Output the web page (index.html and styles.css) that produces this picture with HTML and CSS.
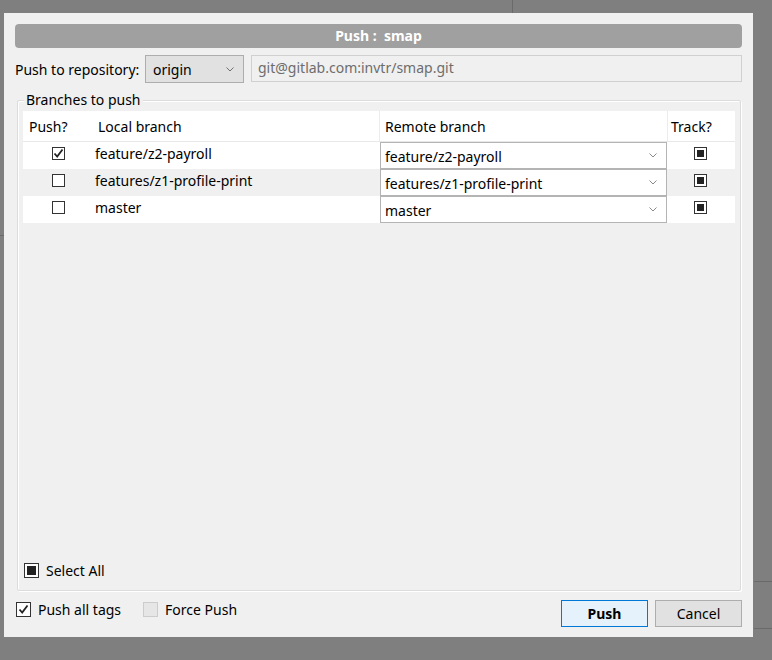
FILE: index.html
```html
<!DOCTYPE html>
<html>
<head>
<meta charset="utf-8">
<link rel="stylesheet" href="styles.css">
</head>
<body>
<div class="bg-line bl-v"></div>
<div class="bg-line bl-h1"></div>
<div class="bg-line bl-h2"></div>
<div class="bg-line bl-h3"></div>
<div class="dialog">
  <div class="title">Push :&nbsp; smap</div>
  <div class="repo-row">
    <span class="repo-label">Push to repository:</span>
    <div class="combo combo-origin"><span>origin</span><svg class="chev" width="8" height="5" viewBox="0 0 8 5"><polyline points="0.5,0.5 4,4 7.5,0.5" fill="none" stroke="#707070" stroke-width="1"/></svg></div>
    <div class="url">git@gitlab.com:invtr/smap.git</div>
  </div>
  <div class="group">
    <div class="group-label">Branches to push</div>
    <div class="table">
      <div class="row head">
        <div class="c-push"><span class="htext">Push?</span></div>
        <div class="c-local"><span class="htext">Local branch</span></div>
        <div class="c-remote"><span class="htext">Remote branch</span></div>
        <div class="c-track"><span class="htext">Track?</span></div>
      </div>
      <div class="row">
        <div class="c-push center"><span class="cb"><svg width="11" height="11" viewBox="0 0 11 11"><polyline points="1.5,5.5 4.2,8.5 9.5,1.5" fill="none" stroke="#222" stroke-width="1.8"/></svg></span></div>
        <div class="c-local"><span class="ltext">feature/z2-payroll</span></div>
        <div class="c-remote"><div class="combo rcombo"><span>feature/z2-payroll</span><svg class="chev" width="8" height="5" viewBox="0 0 8 5"><polyline points="0.5,0.5 4,4 7.5,0.5" fill="none" stroke="#8a8a8a" stroke-width="1"/></svg></div></div>
        <div class="c-track center"><span class="cb ind"><span class="fill"></span></span></div>
      </div>
      <div class="row alt">
        <div class="c-push center"><span class="cb"></span></div>
        <div class="c-local"><span class="ltext">features/z1-profile-print</span></div>
        <div class="c-remote"><div class="combo rcombo"><span>features/z1-profile-print</span><svg class="chev" width="8" height="5" viewBox="0 0 8 5"><polyline points="0.5,0.5 4,4 7.5,0.5" fill="none" stroke="#8a8a8a" stroke-width="1"/></svg></div></div>
        <div class="c-track center"><span class="cb ind"><span class="fill"></span></span></div>
      </div>
      <div class="row">
        <div class="c-push center"><span class="cb"></span></div>
        <div class="c-local"><span class="ltext">master</span></div>
        <div class="c-remote"><div class="combo rcombo"><span>master</span><svg class="chev" width="8" height="5" viewBox="0 0 8 5"><polyline points="0.5,0.5 4,4 7.5,0.5" fill="none" stroke="#8a8a8a" stroke-width="1"/></svg></div></div>
        <div class="c-track center"><span class="cb ind"><span class="fill"></span></span></div>
      </div>
    </div>
    <div class="select-all">
      <span class="cb ind"><span class="fill"></span></span>
      <span class="sa-text">Select All</span>
    </div>
  </div>
  <div class="bottom">
    <div class="opt">
      <span class="cb"><svg width="11" height="11" viewBox="0 0 11 11"><polyline points="1.5,5.5 4.2,8.5 9.5,1.5" fill="none" stroke="#222" stroke-width="1.8"/></svg></span>
      <span class="opt-text">Push all tags</span>
    </div>
    <div class="opt opt-force">
      <span class="cb disabled"></span>
      <span class="opt-text">Force Push</span>
    </div>
    <div class="spacer"></div>
    <button class="btn btn-default">Push</button>
    <button class="btn">Cancel</button>
  </div>
</div>
</body>
</html>
```

FILE: styles.css
```css
html, body {
  margin: 0;
  padding: 0;
}
body {
  background: #7f7f7f;
  width: 772px;
  height: 660px;
  overflow: hidden;
  position: relative;
  font-family: "Noto Sans", "Open Sans", sans-serif;
  font-size: 14px;
  color: #000;
}
.bg-line {
  position: absolute;
  background: #6a6a6a;
}
.bl-v { left: 512px; top: 0; width: 1px; height: 13px; }
.bl-h1 { left: 0; top: 235px; width: 4px; height: 1px; }
.bl-h2 { left: 754px; top: 581px; width: 18px; height: 1px; }
.bl-h3 { left: 754px; top: 628px; width: 18px; height: 1px; }

.dialog {
  position: relative;
  margin: 13px 0 0 4px;
  width: 749px;
  height: 624px;
  box-sizing: border-box;
  background: #f0f0f0;
  padding: 11px 11px 0 11px;
  display: flex;
  flex-direction: column;
}
.title {
  height: 24px;
  line-height: 24px;
  background: #a0a0a0;
  border-radius: 4px;
  color: #fff;
  font-weight: bold;
  text-align: center;
  font-size: 14px;
}
.repo-row {
  margin-top: 7px;
  display: flex;
  align-items: center;
  height: 28px;
}
.repo-label {
  width: 130px;
}
.combo {
  display: flex;
  align-items: center;
  box-sizing: border-box;
  border: 1px solid #adadad;
  padding: 0 9px 0 7px;
}
.combo span { flex: 1; white-space: nowrap; }
.combo-origin {
  width: 99px;
  height: 28px;
  background: #e1e1e1;
}
.url {
  margin-left: 7px;
  flex: 1;
  height: 27px;
  box-sizing: border-box;
  border: 1px solid #d0d0d0;
  background: #f0f0f0;
  color: #6d6d6d;
  padding: 0 0 0 6px;
  line-height: 24px;
  margin-top: -1px;
}
.group {
  margin: 17px 1px 0 2px;
  height: 491px;
  box-sizing: border-box;
  border: 1px solid #dcdcdc;
  box-shadow: inset 1px 1px 0 #fff, 1px 1px 0 #fff;
  border-radius: 2px;
  position: relative;
  padding: 10px 5px 0 5px;
  display: flex;
  flex-direction: column;
}
.group-label {
  position: absolute;
  left: 6px;
  top: -10px;
  background: #f0f0f0;
  padding: 0 2px;
  line-height: 18px;
}
.table {
  display: flex;
  flex-direction: column;
}
.row {
  display: flex;
  height: 27px;
  background: #fff;
}
.row.head {
  border-bottom: 1px solid #e8e8e8;
  height: 31px;
  box-sizing: border-box;
}
.row.alt { background: #f0f0f0; }
.c-push { width: 70px; }
.c-local { width: 286px; }
.c-remote { width: 288px; }
.c-track { width: 68px; }
.head > div { display: flex; align-items: center; }
.head .c-remote { border-left: 1px solid #ececec; box-sizing: border-box; }
.head .c-track { border-left: 1px solid #ececec; box-sizing: border-box; }
.htext { padding-left: 6px; }
.head .c-local .htext { padding-left: 5px; }
.head .c-remote .htext { padding-left: 5px; }
.head .c-track .htext { padding-left: 3px; }
.center { display: flex; align-items: center; justify-content: center; }
.c-push.center { justify-content: flex-start; padding-left: 29px; box-sizing: border-box; }
.c-track.center { justify-content: flex-start; padding-left: 27px; box-sizing: border-box; }
.c-local { display: flex; align-items: center; }
.ltext { padding-left: 2px; position: relative; top: -2px; }
.rcombo {
  margin-left: 1px;
  width: 287px;
  height: 27px;
  background: #fff;
  border-color: #b4b4b4;
  padding-left: 4px;
  padding-right: 9px;
}
.rcombo span { position: relative; top: 1px; }
.cb {
  width: 13px;
  height: 13px;
  box-sizing: border-box;
  border: 1px solid #333;
  background: #fff;
  display: inline-flex;
  align-items: center;
  justify-content: center;
  flex: none;
}
.cb svg { display: block; }
.cb.ind .fill {
  width: 7px;
  height: 7px;
  background: #222;
}
.cb.disabled {
  border-color: #cccccc;
  background: #e6e6e6;
}
.c-push .cb { position: relative; top: -2px; }
.c-track .cb { position: relative; top: -2px; }
.select-all {
  margin-top: auto;
  margin-bottom: 10px;
  display: flex;
  align-items: center;
  padding-left: 1px;
}
.select-all .cb { width: 15px; height: 15px; }
.select-all .cb .fill { width: 9px; height: 9px; }
.sa-text { margin-left: 7px; }
.bottom {
  margin-top: 9px;
  display: flex;
  align-items: flex-start;
  margin-left: 1px;
}
.opt {
  display: flex;
  align-items: center;
  height: 17px;
  margin-top: 1px;
}
.opt .cb { width: 15px; height: 15px; }
.opt-text { margin-left: 7px; }
.opt-force { margin-left: 22px; }
.spacer { flex: 1; }
.btn {
  width: 87px;
  height: 27px;
  box-sizing: border-box;
  border: 1px solid #adadad;
  background: #e1e1e1;
  font-family: "Noto Sans", "Open Sans", sans-serif;
  font-size: 14px;
  color: #000;
  padding: 0;
  margin: 0;
}
.btn-default {
  border-color: #0078d7;
  background: #e5f1fb;
  font-weight: bold;
  margin-right: 7px;
}
```
